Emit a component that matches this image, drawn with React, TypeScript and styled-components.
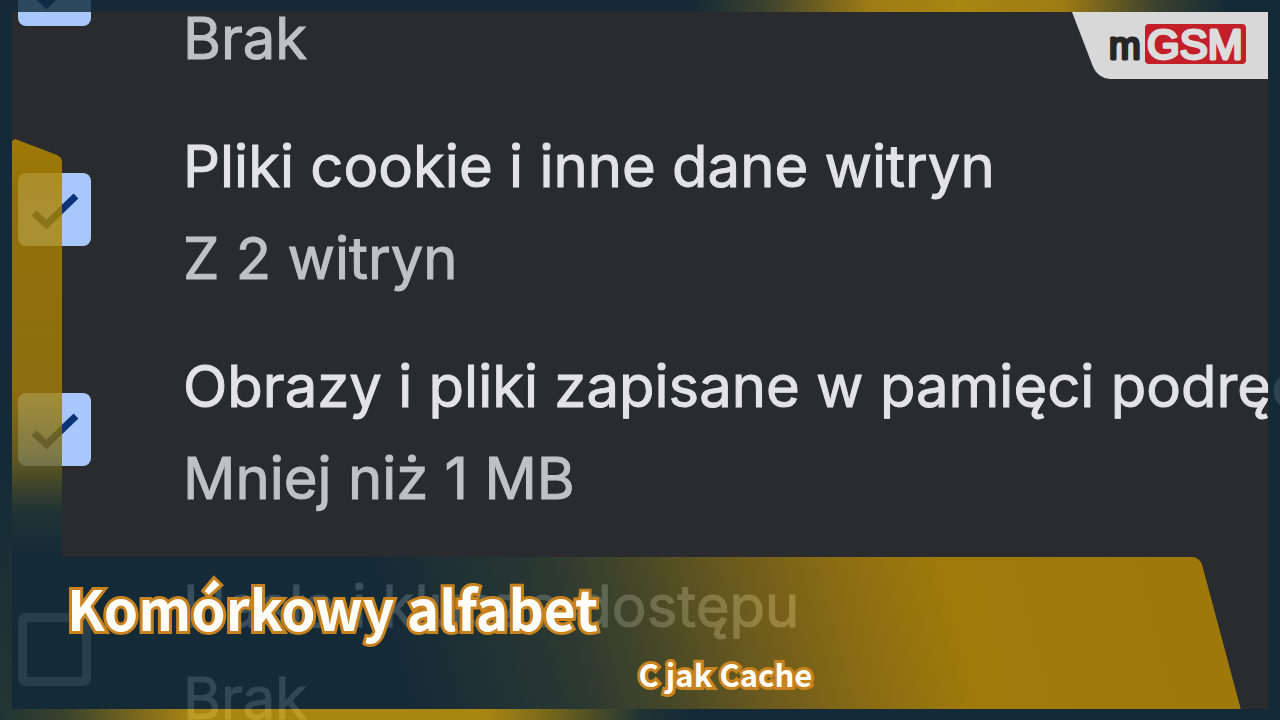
import React, { useState } from 'react';
import styled, { createGlobalStyle } from 'styled-components';

const GlobalStyle = createGlobalStyle`
  * { box-sizing: border-box; }
  body { margin: 0; background: #2a2b2f; }
`;

const Stage = styled.main`
  position: relative;
  height: 100vh;
  min-height: 720px;
  overflow: hidden;
  background: #2a2b2f;
  font-family: Inter, Roboto, 'Liberation Sans', sans-serif;
`;

/* The list is shown scrolled part of the way through its first row. */
const OptionList = styled.ul`
  list-style: none;
  margin: -121px 0 0;
  padding: 0 0 0 18px;
`;

const Option = styled.li`
  display: flex;
  align-items: center;
  gap: 92px;
  height: 220px;
`;

const CheckBox = styled.span`
  position: relative;
  flex: none;
  width: 73px;
  height: 73px;
`;

const CheckInput = styled.input`
  appearance: none;
  display: block;
  width: 100%;
  height: 100%;
  margin: 0;
  border: 9px solid #8e918f;
  border-radius: 8px;

  &:checked {
    border: 0;
    background: #a8c7fa;
  }
`;

const CheckMark = styled.svg`
  position: absolute;
  inset: 0;
  pointer-events: none;
`;

const OptionLabel = styled.label`
  display: flex;
  flex-direction: column;
  padding-top: 6px;
  white-space: nowrap;
  font-size: 58px;
  line-height: 92px;
  -webkit-text-stroke: 1px currentColor;
`;

const OptionName = styled.span`
  min-height: 92px;
  color: #e3e3e6;
`;

const OptionDetail = styled.span`
  color: #c0c1c2;
`;

const Overlay = styled.div`
  position: absolute;
  inset: 0;
  display: flex;
  flex-direction: column;
  pointer-events: none;
`;

const TopEdge = styled.div`
  height: 12px;
  background: linear-gradient(
    90deg,
    rgba(16, 42, 56, 0.8) 54%,
    rgba(64, 70, 45, 0.9) 60%,
    rgba(165, 128, 18, 0.95) 68%,
    rgba(176, 138, 16, 0.95) 75%,
    rgba(165, 128, 18, 0.95) 83%,
    rgba(64, 70, 45, 0.9) 90%,
    rgba(16, 42, 56, 0.86) 96%
  );
`;

const Middle = styled.div`
  flex: 1;
  display: flex;
`;

const SideEdge = styled.div<{ $tint: string }>`
  width: 12px;
  background: linear-gradient(180deg, rgba(16, 42, 56, 0.86) 65%, ${(p) => p.$tint});
`;

const BottomEdge = styled.div`
  height: 11px;
  background: linear-gradient(
    90deg,
    rgba(30, 54, 54, 0.86),
    rgba(60, 70, 44, 0.86) 5%,
    rgba(190, 148, 14, 0.86) 15%,
    rgba(190, 148, 14, 0.86) 38%,
    rgba(130, 112, 24, 0.86) 43%,
    rgba(32, 54, 52, 0.86) 50%,
    rgba(16, 42, 56, 0.86) 54%
  );
`;

const Inner = styled.div`
  flex: 1;
  display: flex;
`;

const SidePanel = styled.div`
  width: 50px;
  margin-top: 127px;
  background: linear-gradient(
    180deg,
    rgba(172, 130, 0, 0.9),
    rgba(172, 130, 0, 0.8) 12%,
    rgba(166, 128, 8, 0.8) 44%,
    rgba(112, 100, 28, 0.8) 56%,
    rgba(30, 54, 54, 0.8) 65%,
    rgba(15, 42, 57, 0.8) 73%
  );
  clip-path: polygon(0 2px, 3px 0, 45px 16px, 49px 19px, 50px 23px, 50px 100%, 0 100%);
`;

const Column = styled.div`
  flex: 1;
  display: flex;
  flex-direction: column;
  justify-content: space-between;
`;

const Brand = styled.a`
  position: relative;
  align-self: flex-end;
  width: 196px;
  height: 67px;
  padding: 10px 22px 0 36px;
  overflow: hidden;
  pointer-events: auto;

  &::before {
    content: '';
    position: absolute;
    inset: 0 -40px 0 0;
    background: #d8d8d8;
    border-radius: 0 0 0 12px;
    transform: skewX(21deg);
    transform-origin: top;
  }
`;

const BrandLogo = styled.svg`
  position: relative;
  display: block;
  width: 138px;
  height: 44px;
  font-family: 'Liberation Sans', sans-serif;
  stroke-width: 3px;
  stroke-linejoin: round;
`;

const Banner = styled.header`
  position: relative;
  display: grid;
  grid-template-columns: 1fr 1fr;
  align-content: start;
  height: 152px;
  padding: 9px 58px 0 5px;
  overflow: hidden;
  font-family: 'Noto Sans CJK SC', 'Noto Sans', sans-serif;
  font-weight: bold;
  color: #fffdf8;
  white-space: nowrap;

  &::before {
    content: '';
    position: absolute;
    inset: 0 68px 0 -50px;
    border-radius: 0 8px 0 0;
    transform: skewX(15deg);
    transform-origin: top;
    background: linear-gradient(
      90deg,
      rgba(15, 42, 57, 0.8) 30%,
      rgba(44, 60, 50, 0.8) 45%,
      rgba(76, 78, 38, 0.8) 52%,
      rgba(126, 104, 24, 0.8) 61%,
      rgba(162, 124, 12, 0.8) 69%,
      rgba(189, 142, 0, 0.8) 78%,
      rgba(187, 140, 0, 0.8)
    );
  }
`;

const Title = styled.h1`
  position: relative;
  grid-column: 1 / -1;
  margin: 0;
  font-size: 55px;
  line-height: 82px;
  -webkit-text-stroke: 6px #c8821e;
  paint-order: stroke fill;
`;

const Subtitle = styled.p`
  position: relative;
  grid-column: 2;
  margin: 0;
  font-size: 31px;
  line-height: 52px;
  -webkit-text-stroke: 6px #c8821e;
  paint-order: stroke fill;
`;

const options = [
  { id: 'earlier', name: '', detail: 'Brak', checked: true },
  { id: 'cookies', name: 'Pliki cookie i inne dane witryn', detail: 'Z 2 witryn', checked: true },
  { id: 'cache', name: 'Obrazy i pliki zapisane w pamięci podręcznej', detail: 'Mniej niż 1 MB', checked: true },
  { id: 'passwords', name: 'Hasła i klucze dostępu', detail: 'Brak', checked: false },
];

function OptionRow({ id, name, detail, checked }: (typeof options)[number]) {
  const [on, setOn] = useState(checked);
  return (
    <Option>
      <CheckBox>
        <CheckInput id={id} type="checkbox" checked={on} onChange={() => setOn(!on)} />
        {on && (
          <CheckMark viewBox="0 0 73 73" aria-hidden="true">
            <path d="M16 40 L28.500 51.500 L58 23" fill="none" stroke="#0b3377" strokeWidth="7" />
          </CheckMark>
        )}
      </CheckBox>
      <OptionLabel htmlFor={id}>
        <OptionName>{name}</OptionName>
        <OptionDetail>{detail}</OptionDetail>
      </OptionLabel>
    </Option>
  );
}

export default function App() {
  return (
    <Stage>
      <GlobalStyle />
      <OptionList>
        {options.map((option) => (
          <OptionRow key={option.id} {...option} />
        ))}
      </OptionList>
      <Overlay>
        <TopEdge />
        <Middle>
          <SideEdge $tint="rgba(34, 56, 52, 0.86)" />
          <Inner>
            <SidePanel />
            <Column>
              <Brand href="#" aria-label="mGSM">
                <BrandLogo viewBox="0 0 138 44">
                  <rect x="37" y="2" width="101" height="40" rx="4" fill="#c21f29" />
                  <text x="1" y="37" fontSize="38" fill="#262626" stroke="#262626">m</text>
                  <text x="39" y="37" fontSize="42" fill="#dcdcdc" stroke="#dcdcdc">GSM</text>
                </BrandLogo>
              </Brand>
              <Banner>
                <Title>Komórkowy alfabet</Title>
                <Subtitle>C jak Cache</Subtitle>
              </Banner>
            </Column>
          </Inner>
          <SideEdge $tint="rgba(16, 42, 56, 0.86)" />
        </Middle>
        <BottomEdge />
      </Overlay>
    </Stage>
  );
}
